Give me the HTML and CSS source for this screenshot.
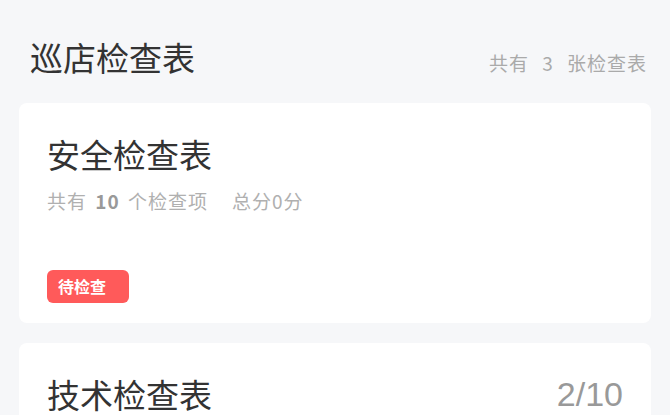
FILE: index.html
```html
<!DOCTYPE html>
<html lang="zh-CN">
<head>
    <meta charset="UTF-8">
    <meta name="viewport" content="width=device-width, initial-scale=1.0">
    <title>巡店检查表</title>
    <link rel="stylesheet" href="styles.css">
</head>
<body>
    <div class="page">
        <div class="header">
            <h2>巡店检查表</h2>
            <span class="count">共有 3 张检查表</span>
        </div>

        <div class="card">
            <div class="card-head">
                <h3>安全检查表</h3>
            </div>
            <p class="meta">共有 <b>10</b> 个检查项<span class="score">总分0分</span></p>
            <span class="badge">待检查</span>
        </div>

        <div class="card">
            <div class="card-head">
                <h3>技术检查表</h3>
                <span class="progress">2/10</span>
            </div>
            <p class="meta">共有 <b>10</b> 个检查项<span class="score">总分0分</span></p>
        </div>
    </div>
</body>
</html>
```

FILE: styles.css
```css
body {
    margin: 0;
    padding: 0;
    background: #f6f7f9;
    font-family: "Noto Sans CJK SC", "Noto Sans", sans-serif;
    color: #333;
}
.page {
    padding: 38px 19px 0;
}
.header {
    display: flex;
    justify-content: space-between;
    align-items: baseline;
    padding: 0 4px 0 11px;
    margin-bottom: 27px;
}
.header h2 {
    margin: 0;
    font-size: 33px;
    font-weight: 400;
    line-height: 38px;
    color: #333;
}
.count {
    font-size: 19px;
    letter-spacing: 1px;
    word-spacing: 8px;
    color: #aaa;
}
.card {
    background: white;
    border-radius: 8px;
    padding: 32px 28px 20px;
    margin-bottom: 20px;
}
.card-head {
    display: flex;
    justify-content: space-between;
    align-items: center;
}
.card-head h3 {
    margin: 0;
    font-size: 33px;
    font-weight: 400;
    line-height: 38px;
    color: #333;
}
.progress {
    font-family: "Liberation Sans", Arial, sans-serif;
    font-size: 34px;
    color: #999;
    line-height: 38px;
}
.meta {
    margin: 16px 0 0;
    font-size: 19px;
    letter-spacing: 1px;
    word-spacing: 3px;
    line-height: 24px;
    color: #b0b0b0;
}
.meta b {
    color: #999;
}
.score {
    margin-left: 24px;
}
.badge {
    display: block;
    width: 71px;
    margin-top: 57px;
    padding-left: 11px;
    height: 33px;
    line-height: 33px;
    background: #ff5a5a;
    color: white;
    font-size: 16px;
    font-weight: 700;
    border-radius: 6px;
}
```
